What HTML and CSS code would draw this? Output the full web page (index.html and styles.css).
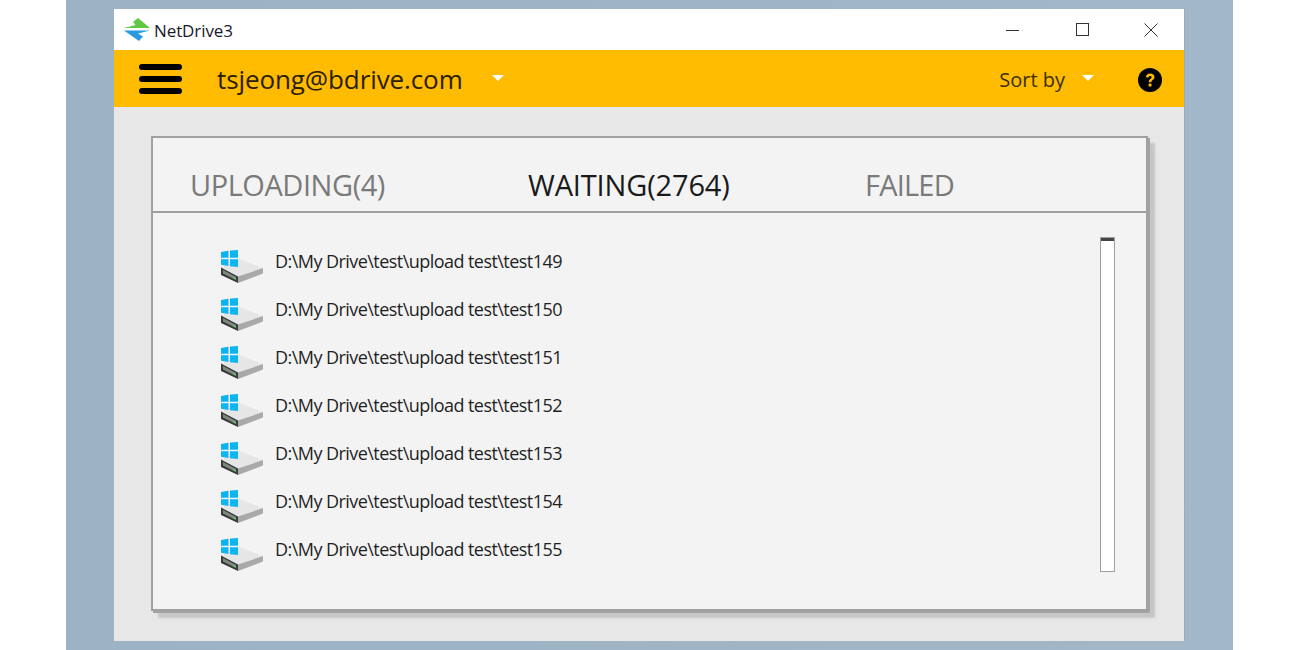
FILE: index.html
```html
<!DOCTYPE html>
<html lang="en">
<head>
<meta charset="utf-8">
<title>NetDrive3</title>
<link rel="stylesheet" href="styles.css">
</head>
<body>
<div class="desktop">
  <div class="window">
    <div class="titlebar">
      <svg class="logo" width="27" height="24" viewBox="0 0 27 24">
        <path d="M0 10 L11.500 7 L9 4 L14 0 L26 10 Z" fill="#62c745"/>
        <path d="M0 12.500 H26 L14 15.500 L19 18.500 L15 23 Z" fill="#2a9be0"/>
      </svg>
      <span class="app-name">NetDrive3</span>
      <div class="win-controls">
        <svg class="win-btn" width="14" height="14" viewBox="0 0 14 14"><path d="M0 7.500 H13" stroke="#333" fill="none"/></svg>
        <svg class="win-btn win-max" width="14" height="14" viewBox="0 0 14 14"><rect x="0.500" y="0.500" width="12" height="12" stroke="#333" fill="none"/></svg>
        <svg class="win-btn" width="14" height="14" viewBox="0 0 14 14"><path d="M0.500 0.500 L13.500 13.500 M13.500 0.500 L0.500 13.500" stroke="#333" fill="none"/></svg>
      </div>
    </div>
    <div class="toolbar">
      <div class="hamburger"><i></i><i></i><i></i></div>
      <span class="account">tsjeong@bdrive.com</span>
      <span class="caret account-caret"></span>
      <span class="sort">Sort by</span>
      <span class="caret sort-caret"></span>
      <svg class="help" width="24" height="24" viewBox="0 0 24 24">
        <circle cx="12" cy="12" r="12" fill="#000"/>
        <path d="M7.800 9.300 C8 6.700 9.800 5.400 12.200 5.400 C14.700 5.400 16.500 6.900 16.500 9 C16.500 11.900 13.400 11.900 13.400 14.300 H10.700 C10.700 10.900 13.600 10.800 13.600 9.200 C13.600 8.400 13 7.900 12.100 7.900 C11.200 7.900 10.600 8.500 10.500 9.600 Z" fill="#ffbb00"/>
        <rect x="10.600" y="15.500" width="2.900" height="2.900" rx="0.500" fill="#ffbb00"/>
      </svg>
    </div>
    <div class="content">
      <div class="panel">
        <div class="tabs">
          <span class="tab tab-uploading">UPLOADING(4)</span>
          <span class="tab tab-waiting">WAITING(2764)</span>
          <span class="tab tab-failed">FAILED</span>
        </div>
        <div class="list-area">
          <ul class="files">
            <li class="file"><svg class="drive"><use href="#drive"/></svg><span>D:\My Drive\test\upload test\test149</span></li>
            <li class="file"><svg class="drive"><use href="#drive"/></svg><span>D:\My Drive\test\upload test\test150</span></li>
            <li class="file"><svg class="drive"><use href="#drive"/></svg><span>D:\My Drive\test\upload test\test151</span></li>
            <li class="file"><svg class="drive"><use href="#drive"/></svg><span>D:\My Drive\test\upload test\test152</span></li>
            <li class="file"><svg class="drive"><use href="#drive"/></svg><span>D:\My Drive\test\upload test\test153</span></li>
            <li class="file"><svg class="drive"><use href="#drive"/></svg><span>D:\My Drive\test\upload test\test154</span></li>
            <li class="file"><svg class="drive"><use href="#drive"/></svg><span>D:\My Drive\test\upload test\test155</span></li>
          </ul>
          <div class="scrollbar"><div class="thumb"></div></div>
        </div>
      </div>
    </div>
  </div>
</div>
<svg width="0" height="0" class="defs">
  <defs>
    <symbol id="drive" viewBox="0 0 44 34">
      <path d="M0 17 L18 9 L42 18 L17 26.500 Z" fill="#e6e6e6"/>
      <path d="M17 26.500 L42 18 V23.500 L17 33 Z" fill="#a9a9a9"/>
      <path d="M0 17.500 L17 26.500 V33 L0 25 Z" fill="#3a3a3a"/>
      <path d="M2 20 L15 27 V30 L2 23.500 Z" fill="#7d8a80"/>
      <path d="M12 27.500 L15 29" stroke="#5fd06a" stroke-width="1.300"/>
      <path d="M0 2 L7.500 0.800 V7.800 H0 Z M9 0.600 L17 0 V7.800 H9 Z M0 9.300 H7.500 V16 L0 14.800 Z M9 9.300 H17 V17 L9 16.200 Z" fill="#0cb4f2"/>
    </symbol>
  </defs>
</svg>
</body>
</html>
```
FILE: styles.css
```css
* { box-sizing: border-box; }
html, body { margin: 0; padding: 0; }
body {
  width: 1300px;
  height: 650px;
  background: #fff;
  overflow: hidden;
  font-family: "Open Sans", "Noto Sans", sans-serif;
}
.defs { display: block; height: 0; }
.desktop {
  width: 1167px;
  height: 650px;
  margin-left: 66px;
  padding: 9px 49px 9px 48px;
  background: linear-gradient(90deg, #9cb3c5, #a2b7c7);
}
.window {
  width: 1071px;
  height: 632px;
  display: flex;
  flex-direction: column;
  border-right: 1px solid #95adbf;
  border-bottom: 1px solid #95adbf;
}
.titlebar {
  height: 41px;
  flex: none;
  background: #fff;
  display: flex;
  align-items: center;
  padding-left: 10px;
}
.logo { flex: none; margin-top: 1px; }
.app-name {
  margin-left: 3px;
  font-size: 17px;
  letter-spacing: -0.1px;
  color: #1a1a2a;
  margin-top: 1px;
}
.win-controls {
  margin-left: auto;
  display: flex;
  gap: 55px;
  padding-right: 26px;
}
.win-btn { display: block; }
.win-max { margin: 0 -1px 0 1px; }
.toolbar {
  height: 57px;
  flex: none;
  background: #ffbb00;
  display: flex;
  align-items: center;
  color: #2a2000;
}
.hamburger {
  margin-left: 25px;
  width: 43px;
  display: flex;
  flex-direction: column;
  gap: 6px;
}
.hamburger i {
  display: block;
  height: 6px;
  border-radius: 3px;
  background: #000;
}
.account {
  margin-left: 35px;
  margin-top: 1px;
  font-size: 26px;
  letter-spacing: -0.1px;
  color: #2a2000;
  width: 246px;
  white-space: nowrap;
}
.caret {
  display: block;
  width: 0;
  height: 0;
  border-left: 6px solid transparent;
  border-right: 6px solid transparent;
  border-top: 6px solid #fff;
  margin-top: -2px;
}
.account-caret { margin-left: 29px; }
.sort {
  margin-left: auto;
  margin-top: 2px;
  font-size: 20px;
  color: #3a2f00;
}
.sort-caret { margin-left: 17px; margin-right: -1px; }
.help { margin: 3px 22px 0 45px; flex: none; }
.content {
  flex: 1;
  background: #e7e7e7;
  padding: 29px 36px 30px 37px;
}
.panel {
  width: 997px;
  height: 475px;
  background: #f3f3f3;
  border: 2px solid #a0a0a0;
  box-shadow: 2px 2px 0 #a3a3a3, 7px 7px 2px #c6c6c6;
  display: flex;
  flex-direction: column;
}
.tabs {
  height: 75px;
  flex: none;
  border-bottom: 2px solid #a0a0a0;
  display: flex;
  align-items: flex-end;
  padding: 0 0 8px 37px;
  font-size: 29px;
  letter-spacing: -0.45px;
  line-height: 36px;
}
.tab { display: block; color: #7a7a7a; white-space: nowrap; }
.tab-uploading { width: 338px; }
.tab-waiting { width: 337px; color: #1a1a1a; letter-spacing: -0.15px; }
.tab-failed { letter-spacing: -0.8px; }
.list-area {
  flex: 1;
  display: flex;
  justify-content: space-between;
  padding: 24px 31px 0 68px;
}
.files { list-style: none; margin: 0; padding: 0; }
.file {
  display: flex;
  align-items: center;
  height: 48px;
  font-size: 18px;
  letter-spacing: -0.55px;
  color: #1f1f1f;
}
.drive { width: 44px; height: 34px; flex: none; margin-right: 10px; margin-top: 12px; }
.scrollbar {
  width: 15px;
  height: 335px;
  background: #fff;
  border: 1px solid #a0a0a0;
}
.thumb { height: 3px; background: #444; }
```
